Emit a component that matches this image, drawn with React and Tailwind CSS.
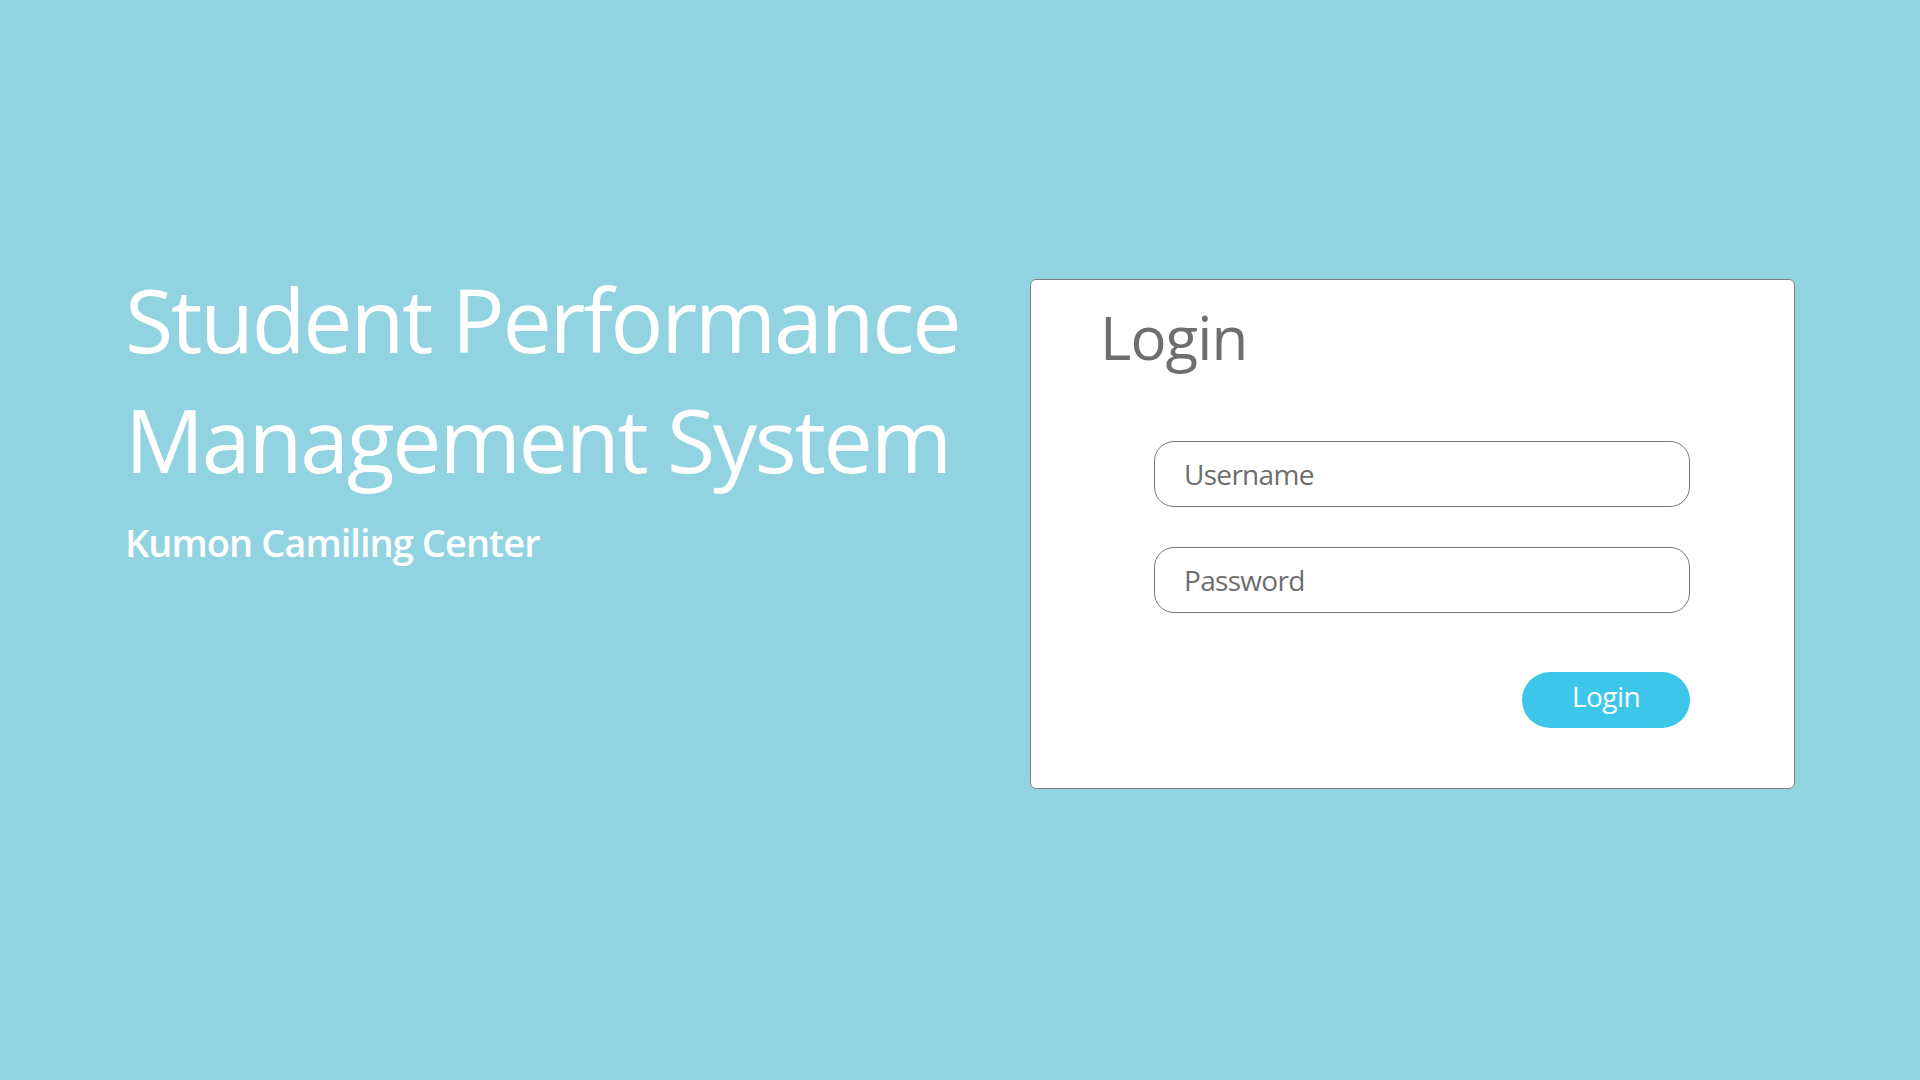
export default function App() {
  return (
    <div className="min-h-screen w-full bg-[#92d3e1] flex font-['Open_Sans','Noto_Sans',sans-serif]">
      <div className="w-[1030px] shrink-0 pl-[125px] pt-[259px] text-white">
        <h1 className="text-[88px] leading-[120px] font-normal tracking-[-0.026em]">
          <span className="block whitespace-nowrap">Student Performance</span>
          <span className="block whitespace-nowrap">Management System</span>
        </h1>
        <p className="mt-[18px] text-[38px] leading-[50px] font-semibold tracking-[-0.025em] whitespace-nowrap">
          Kumon Camiling Center
        </p>
      </div>
      <div className="mt-[279px] w-[765px] h-[510px] shrink-0 bg-white border border-[#7f7f7f] rounded-[6px]">
        <h2 className="pl-[69px] pt-[21px] text-[60px] leading-[72px] text-[#6e6e6e] font-normal tracking-[-0.015em]">Login</h2>
        <div className="ml-[123px] mt-[68px] w-[536px] flex flex-col">
          <input
            type="text"
            placeholder="Username"
            className="h-[66px] w-full rounded-[20px] border border-[#777777] px-[29px] text-[28px] tracking-[-0.025em] text-[#6e6e6e] placeholder:text-[#6e6e6e] outline-none"
          />
          <input
            type="password"
            placeholder="Password"
            className="mt-[40px] h-[66px] w-full rounded-[20px] border border-[#777777] px-[29px] text-[28px] tracking-[-0.025em] text-[#6e6e6e] placeholder:text-[#6e6e6e] outline-none"
          />
          <button className="mt-[59px] self-end w-[168px] h-[56px] rounded-full bg-[#3cc6ea] text-white text-[28px] leading-none tracking-[-0.02em] pb-[8px]">
            Login
          </button>
        </div>
      </div>
    </div>
  );
}
